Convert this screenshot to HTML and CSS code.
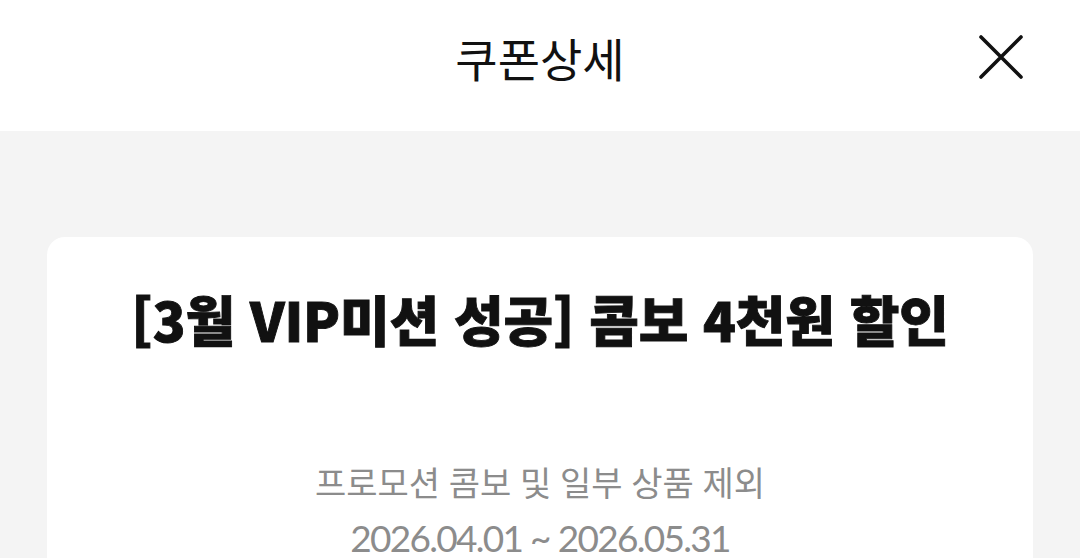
FILE: index.html
```html
<!DOCTYPE html>
<html lang="ko">
<head>
<meta charset="utf-8">
<link rel="stylesheet" href="styles.css">
</head>
<body>
<header class="top">
  <div class="side"></div>
  <h1 class="page-title">쿠폰상세</h1>
  <div class="side side-right">
    <button class="close" aria-label="닫기">
      <svg width="44" height="44" viewBox="0 0 44 44"><path d="M2 2 L42 42 M42 2 L2 42" stroke="#111" stroke-width="3.6" stroke-linecap="round" fill="none"/></svg>
    </button>
  </div>
</header>
<main class="content">
  <section class="card">
    <h2 class="coupon-name">[3월 VIP미션 성공] 콤보 4천원 할인</h2>
    <p class="coupon-desc">프로모션 콤보 및 일부 상품 제외</p>
    <p class="coupon-date">2026.04.01 ~ 2026.05.31</p>
  </section>
</main>
</body>
</html>
```
FILE: styles.css
```css
* { box-sizing: border-box; }
html, body { margin: 0; padding: 0; }
body {
  background: #f4f4f4;
  font-family: Lato, "Noto Sans CJK KR", sans-serif;
  width: 1080px;
  height: 558px;
  overflow: hidden;
}
.top {
  height: 131px;
  background: #fff;
  display: grid;
  grid-template-columns: 1fr auto 1fr;
  align-items: center;
  padding-bottom: 18px;
}
.page-title {
  margin: 0;
  font-family: "Noto Sans CJK KR", sans-serif;
  font-weight: 400;
  font-size: 46px;
  color: #111;
  line-height: 1;
}
.side-right {
  display: flex;
  justify-content: flex-end;
  padding-right: 57px;
}
.close {
  border: 0;
  background: none;
  padding: 0;
  width: 44px;
  height: 44px;
  display: block;
}
.close svg { display: block; }
.content {
  padding: 106px 47px 0;
}
.card {
  background: #fff;
  border-radius: 18px;
  padding: 44px 20px 40px;
  text-align: center;
  min-height: 400px;
}
.coupon-name {
  margin: 0 0 98px;
  font-family: "Noto Sans CJK KR", sans-serif;
  font-weight: 900;
  font-size: 54px;
  line-height: 76px;
  letter-spacing: -0.2px;
  color: #111;
  -webkit-text-stroke: 0.9px #111;
}
.coupon-desc, .coupon-date {
  margin: 0;
  font-size: 34px;
  line-height: 55px;
  color: #8c8c8c;
}
.coupon-date {
  font-size: 37px;
  letter-spacing: -1.7px;
}
```
